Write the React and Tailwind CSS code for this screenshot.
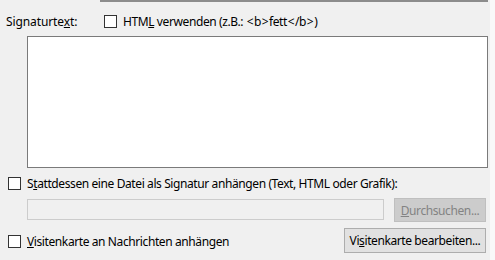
import React from "react";

function Box() {
  return <div className="w-[13px] h-[13px] shrink-0 border border-[#333333] bg-white" />;
}

function B({ c }) {
  return <span className="px-[0.8px]">{c}</span>;
}

export default function App() {
  return (
    <div className="flex w-[495px] h-[260px] bg-[#f0f0f0] text-[12px] leading-[13px] tracking-[-0.4px] text-black overflow-hidden" style={{ fontFamily: '"Noto Sans", sans-serif' }}>
      <div className="flex flex-col w-[490px]">
        <div className="ml-[100px] w-[388px] h-[2px] bg-[#8c8c8c]" />
        <div className="flex items-center h-[13px] mt-[13px]">
          <span className="ml-[6px] w-[98px] whitespace-nowrap tracking-[-0.1px]">Signaturte<u>x</u>t:</span>
          <Box />
          <span className="ml-[6px] whitespace-nowrap">
            HTM<u>L</u> verwenden (z.B.: <B c="<" />b<B c=">" />fett<B c="<" />/b<B c=">" />)
          </span>
        </div>
        <div className="mt-[8px] ml-[27px] w-[461px] h-[132px] border border-[#7a7a7a] bg-white" />
        <div className="flex items-center h-[13px] mt-[9px]">
          <div className="ml-[8px]"><Box /></div>
          <span className="ml-[6px] whitespace-nowrap">S<u>t</u>attdessen eine Datei als Signatur anhängen (Text, HTML oder Grafik):</span>
        </div>
        <div className="flex mt-[8px] h-[24px]">
          <div className="ml-[27px] mt-[1px] w-[357px] h-[21px] border border-[#cccccc] bg-[#f0f0f0]" />
          <div className="ml-[10px] w-[92px] h-[24px] flex items-center justify-center border border-[#bfbfbf] bg-[#cccccc] text-[#838383] whitespace-nowrap">
            <span><u>D</u>urchsuchen...</span>
          </div>
        </div>
        <div className="flex mt-[6px]">
          <div className="flex items-center h-[13px] mt-[7px]">
            <div className="ml-[8px]"><Box /></div>
            <span className="ml-[6px] whitespace-nowrap"><u>V</u>isitenkarte an Nachrichten anhängen</span>
          </div>
          <div className="ml-auto mr-[4px] w-[142px] h-[25px] flex items-center justify-center border border-[#adadad] bg-[#e1e1e1] whitespace-nowrap">
            <span>Vi<u>s</u>itenkarte bearbeiten...</span>
          </div>
        </div>
      </div>
      <div className="w-[5px] bg-[#f9f9f9]" />
    </div>
  );
}
